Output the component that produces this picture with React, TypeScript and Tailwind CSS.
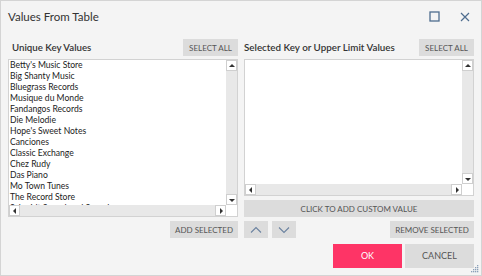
import React from "react"

const items = [
  "Betty's Music Store",
  "Big Shanty Music",
  "Bluegrass Records",
  "Musique du Monde",
  "Fandangos Records",
  "Die Melodie",
  "Hope's Sweet Notes",
  "Canciones",
  "Classic Exchange",
  "Chez Rudy",
  "Das Piano",
  "Mo Town Tunes",
  "The Record Store",
  "Schmidt Sound und Sound",
]

function Arrow({ dir }: { dir: "up" | "down" | "left" | "right" }) {
  const pts = {
    up: "1,5 4,2 7,5",
    down: "1,3 4,6 7,3",
    left: "5,1 2,4 5,7",
    right: "3,1 6,4 3,7",
  }[dir]
  return (
    <svg width="8" height="8" viewBox="0 0 8 8">
      <polygon points={pts} fill="#333" />
    </svg>
  )
}

function ScrollBtn({ dir }: { dir: "up" | "down" | "left" | "right" }) {
  return (
    <div className="w-[11px] h-[11px] bg-white border border-[#cfcfcf] flex items-center justify-center shrink-0">
      <Arrow dir={dir} />
    </div>
  )
}

function ListBox({ children, height }: { children?: React.ReactNode; height: string }) {
  return (
    <div className={`relative bg-white border border-[#d2d2d2] ${height} flex flex-col`}>
      <div className="flex flex-1 min-h-0">
        <div className="flex-1 overflow-hidden pl-[1px]">{children}</div>
        <div className="w-[11px] bg-[#e8e8e8] flex flex-col justify-between">
          <ScrollBtn dir="up" />
          <ScrollBtn dir="down" />
        </div>
      </div>
      <div className="flex h-[11px]">
        <div className="flex-1 bg-[#e8e8e8] flex justify-between">
          <ScrollBtn dir="left" />
          <ScrollBtn dir="right" />
        </div>
        <div className="w-[11px] bg-white" />
      </div>
    </div>
  )
}

function Btn({ children, className = "" }: { children?: React.ReactNode; className?: string }) {
  return (
    <div
      className={`bg-[#dcdcdc] text-[#555] text-[8px] flex items-center justify-center h-[17px] ${className}`}
    >
      {children}
    </div>
  )
}

export default function App() {
  return (
    <div
      className="w-[482px] h-[276px] bg-[#f4f4f4] border border-[#d4d4d4] flex flex-col relative"
      style={{ fontFamily: 'Lato, "Open Sans", sans-serif' }}
    >
      {/* Title bar */}
      <div className="h-[31px] flex items-center pl-[7px] pr-[11px]">
        <div className="text-[11.5px] text-[#333] flex-1">Values From Table</div>
        <svg width="11" height="11" viewBox="0 0 11 11" className="mr-[20px]">
          <rect x="1" y="1" width="9" height="9" fill="none" stroke="#4f6d8f" strokeWidth="1.3" />
        </svg>
        <svg width="10" height="10" viewBox="0 0 10 10">
          <path d="M1 1 L9 9 M9 1 L1 9" stroke="#4f6d8f" strokeWidth="1.2" />
        </svg>
      </div>

      <div className="flex gap-[6px] px-[7px] pt-[7px]">
        {/* Left column */}
        <div className="w-[230px] flex flex-col">
          <div className="flex items-center justify-between h-[17px]">
            <span className="pl-[4px] text-[9.7px] font-semibold text-[#333]">Unique Key Values</span>
            <Btn className="w-[55px]">SELECT ALL</Btn>
          </div>
          <div className="mt-[3px]">
            <ListBox height="h-[158px]">
              <div className="text-[8.6px] leading-[11px] text-[#222]">
                {items.map((t) => (
                  <div key={t} className="whitespace-nowrap h-[11px]">{t}</div>
                ))}
              </div>
            </ListBox>
          </div>
          <div className="flex justify-end mt-[4px]">
            <Btn className="w-[68px]">ADD SELECTED</Btn>
          </div>
        </div>

        {/* Right column */}
        <div className="w-[230px] flex flex-col">
          <div className="flex items-center justify-between h-[17px]">
            <span className="text-[9.8px] font-semibold text-[#333]">Selected Key or Upper Limit Values</span>
            <Btn className="w-[55px]">SELECT ALL</Btn>
          </div>
          <div className="mt-[3px]">
            <ListBox height="h-[137px]" />
          </div>
          <Btn className="mt-[4px] w-full">CLICK TO ADD CUSTOM VALUE</Btn>
          <div className="flex items-center mt-[4px] gap-[4px]">
            <Btn className="w-[24px]">
              <svg width="12" height="8" viewBox="0 0 12 8">
                <path d="M1 6.5 L6 1.5 L11 6.5" fill="none" stroke="#6b82a0" strokeWidth="1.1" />
              </svg>
            </Btn>
            <Btn className="w-[24px]">
              <svg width="12" height="8" viewBox="0 0 12 8">
                <path d="M1 1.5 L6 6.5 L11 1.5" fill="none" stroke="#6b82a0" strokeWidth="1.1" />
              </svg>
            </Btn>
            <div className="flex-1" />
            <Btn className="w-[84px]">REMOVE SELECTED</Btn>
          </div>
          <div className="flex justify-end gap-[3px] mt-[6px]">
            <div className="w-[69px] h-[24px] bg-[#fe3466] text-white text-[9px] flex items-center justify-center">OK</div>
            <div className="w-[69px] h-[24px] bg-[#dcdcdc] text-[#555] text-[9px] flex items-center justify-center">CANCEL</div>
          </div>
        </div>
      </div>

      {/* Resize grip */}
      <svg width="8" height="8" viewBox="0 0 8 8" className="absolute right-[2px] bottom-[2px]">
        <rect x="6" y="0" width="1.3" height="1.3" fill="#8aa0b8" />
        <rect x="4" y="2" width="1.3" height="1.3" fill="#8aa0b8" />
        <rect x="6" y="2" width="1.3" height="1.3" fill="#8aa0b8" />
        <rect x="2" y="4" width="1.3" height="1.3" fill="#8aa0b8" />
        <rect x="4" y="4" width="1.3" height="1.3" fill="#8aa0b8" />
        <rect x="6" y="4" width="1.3" height="1.3" fill="#8aa0b8" />
        <rect x="0" y="6" width="1.3" height="1.3" fill="#8aa0b8" />
        <rect x="2" y="6" width="1.3" height="1.3" fill="#8aa0b8" />
        <rect x="4" y="6" width="1.3" height="1.3" fill="#8aa0b8" />
        <rect x="6" y="6" width="1.3" height="1.3" fill="#8aa0b8" />
      </svg>
    </div>
  )
}
